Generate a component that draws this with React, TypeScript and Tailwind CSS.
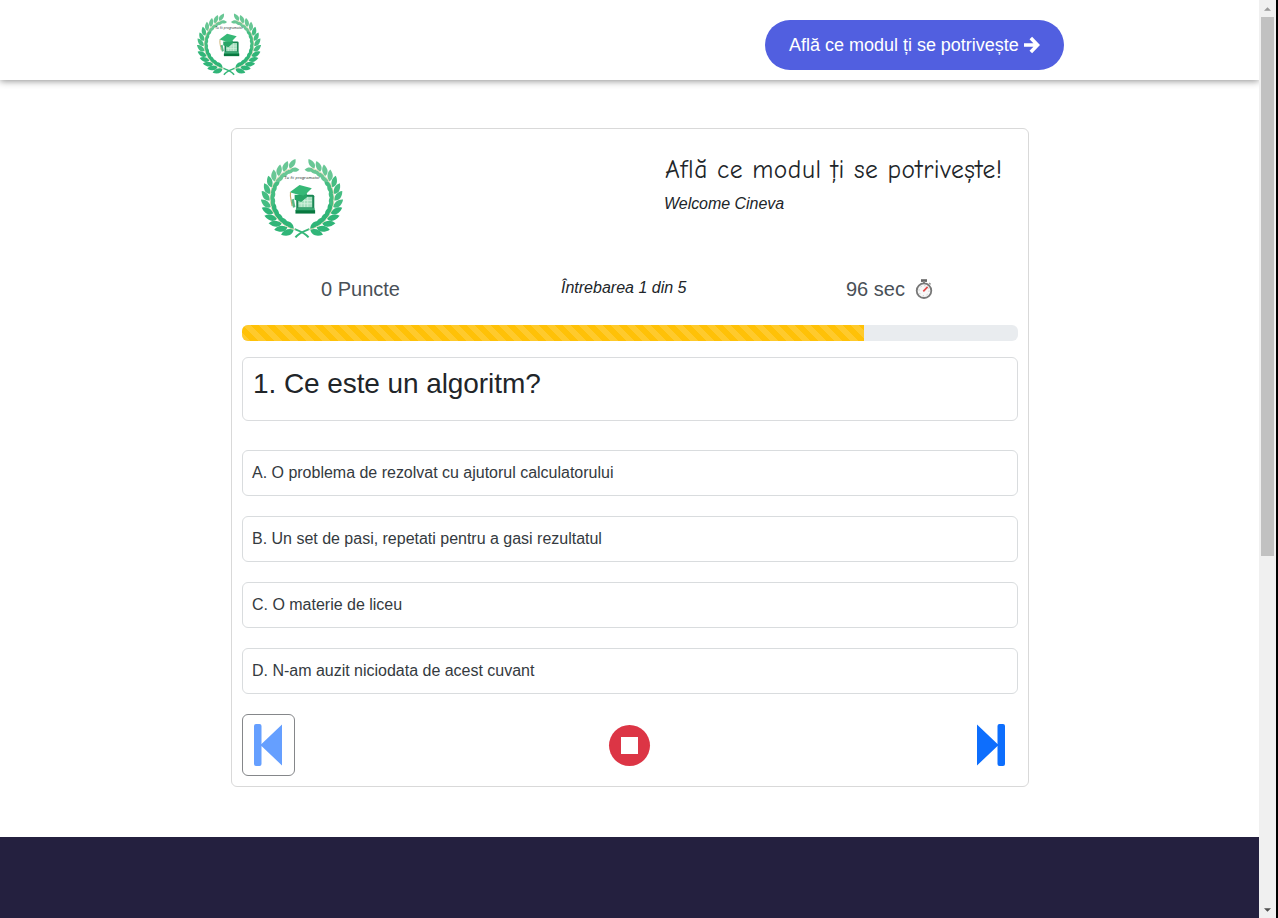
import React from 'react';

const LEAVES = Array.from({ length: 13 }, (_, i) => i);

function Branch() {
  return (
    <g>
      <path d="M58 98C53 92 49 91 41 88" fill="none" stroke="#35b779" strokeWidth="2.4" />
      {LEAVES.map((i) => {
        const deg = 105 + i * 11.9;
        const a = (deg * Math.PI) / 180;
        const r = 39;
        const x = 50 + r * Math.cos(a);
        const y = 50.5 + r * Math.sin(a);
        const size = 1.1 - i * 0.017;
        const fill = i < 5 ? '#30b578' : i < 9 ? '#45bd82' : '#69c795';
        return (
          <g key={i} transform={`translate(${x} ${y}) rotate(${deg + 90}) scale(${size})`} fill={fill}>
            <path d="M0 -0.3C-1 -6 4 -10 12 -9.5C11 -3.5 6 0 0 -0.3Z" />
            <path d="M0 0.5C2 6.5 7 8 11.5 6C9 1 5 -0.5 0 0.5Z" />
          </g>
        );
      })}
      <path d="M42 88.7A39 39 0 0 1 38 13.4" fill="none" stroke="#dccfa3" strokeWidth="0.9" />
    </g>
  );
}

function Logo({ className }: { className: string }) {
  return (
    <svg viewBox="0 0 100 100" className={className} aria-label="Logo">
      <Branch />
      <g transform="translate(100 0) scale(-1 1)">
        <Branch />
      </g>
      <text x="50" y="27" textAnchor="middle" textLength="43" fontSize="5" fontStyle="italic" fontFamily="Liberation Sans, sans-serif" fill="#26332c">
        Tu fii programator
      </text>
      <path d="M45 46h18q2 0 2 2v15H43V48q0-2 2-2Z" fill="#198754" />
      <path d="M45.5 48.5h17v13h-17Z" fill="#a6dfbf" />
      <path d="M49 49v12M53 49v12M57 49v12M46 53h16M46 57h16" stroke="#d5f1df" strokeWidth="1" />
      <path d="M43 62h22l1 4H42Z" fill="#3aa873" />
      <path d="M42 65h24v4H42Z" fill="#08783f" />
      <path d="m35 43 12-9 15 4-10 10Z" fill="#36b876" />
      <path d="M41 46v6l8 3 7-6v-5l-4 3Z" fill="#28a566" />
      <path d="M36 43c-1 6 1 10 2 17" fill="none" stroke="#c7aa68" strokeWidth="1.4" />
      <path d="m37 52 3-1 2 10-3 1Z" fill="#58b886" />
    </svg>
  );
}

function Stopwatch() {
  return (
    <svg viewBox="0 0 18 22" className="h-[22px] w-[18px]">
      <path d="M6 1.2h6v2.7H6Z" fill="#666" />
      <path d="M8 3h2v3H8Z" fill="#888" />
      <path d="m14 5 1.6 1.4" stroke="#999" strokeWidth="1.5" />
      <circle cx="9" cy="12.7" r="7.3" fill="#f7f7f7" stroke="#777" strokeWidth="1.8" />
      <circle cx="9" cy="12.7" r="5" fill="none" stroke="#bbb" strokeWidth="1" strokeDasharray="1 2.9" />
      <path d="m8.3 13.4 4.3-4.5" stroke="#e34848" strokeWidth="1.7" />
    </svg>
  );
}

function SkipIcon({ className }: { className: string }) {
  return (
    <svg viewBox="0 0 28 42" className={className} fill="currentColor">
      <path d="M0 .5 20.5 20V2Q20.5 0 22.5 0H26Q28 0 28 2V40Q28 42 26 42H22.5Q20.5 42 20.5 40V22L0 41.5Z" />
    </svg>
  );
}

const answers = [
  'A. O problema de rezolvat cu ajutorul calculatorului',
  'B. Un set de pasi, repetati pentru a gasi rezultatul',
  'C. O materie de liceu',
  'D. N-am auzit niciodata de acest cuvant',
];

export default function App() {
  return (
    <div className="flex h-[918px] w-[1278px] overflow-hidden bg-white font-['Liberation_Sans',Arial,sans-serif] text-[#212529]">
      <div className="flex w-[1259px] flex-col overflow-hidden">
        <header className="flex h-20 shrink-0 items-start bg-white pr-[195px] pl-[197px] shadow-[0_1px_7px_rgba(0,0,0,0.45)]">
          <Logo className="mt-3 size-16" />
          <button className="mt-5 ml-auto flex h-[50px] w-[299px] items-center rounded-full bg-[#515fe0] pl-6 text-[18px] text-white">
            <span className="tracking-[-0.01px] whitespace-nowrap">Află ce modul ți se potrivește</span>
            <svg viewBox="0 0 16 18" className="ml-[5px] h-[18px] w-4" fill="none" stroke="currentColor" strokeWidth="3.6">
              <path d="M0 9H13M6.8 2 13.6 9 6.8 16" />
            </svg>
          </button>
        </header>

        <main className="flex h-[757px] shrink-0 flex-col pt-12 pl-[231px]">
          <section className="flex h-[659px] w-[798px] flex-col rounded-md border border-[#d9d9d9] px-[10px]">
            <div className="flex h-[140px] shrink-0 pl-[19px]">
              <Logo className="mt-[28px] size-[82px]" />
              <div className="mt-[22px] ml-[321px]">
                <h1 className="h-[38px] pl-px text-[25.5px] leading-[37px] font-medium tracking-[0.55px] whitespace-nowrap font-['Comic_Sans_MS','Comic_Neue','Open_Sans',sans-serif]">
                  Află ce modul ți se potrivește!
                </h1>
                <p className="h-6 text-base leading-[30px] tracking-[-0.04px] italic">Welcome Cineva</p>
              </div>
            </div>

            <div className="flex h-14 shrink-0 pt-[5px] text-xl leading-[30px] text-[#495057]">
              <span className="ml-[79px] w-[240px]">0 Puncte</span>
              <span className="w-[285px] text-base leading-[28px] text-[#212529] italic">Întrebarea 1 din 5</span>
              <span className="flex gap-[10px]">
                96 sec
                <span className="mt-[4px]"><Stopwatch /></span>
              </span>
            </div>

            <div className="h-4 shrink-0 overflow-hidden rounded-md bg-[#e9ecef]">
              <div className="h-full w-[622px] bg-[#ffc107] bg-[linear-gradient(45deg,rgba(255,255,255,.15)_25%,transparent_25%,transparent_50%,rgba(255,255,255,.15)_50%,rgba(255,255,255,.15)_75%,transparent_75%,transparent)] bg-[length:16px_16px]" />
            </div>

            <h2 className="mt-4 h-16 shrink-0 rounded-md border border-[#dadcde] px-[10px] pt-[9px] text-[28px] leading-[34px] tracking-[-0.08px]">1. Ce este un algoritm?</h2>

            <div className="mt-[29px] flex flex-col gap-5">
              {answers.map((answer) => (
                <button key={answer} className="h-[46px] rounded-md border border-[#d9dcde] px-[9px] text-left text-base tracking-[-0.01px] text-[#343a40]">{answer}</button>
              ))}
            </div>

            <div className="mt-5 flex h-[62px] items-center justify-between">
              <button className="flex h-[62px] w-[53px] items-center justify-center rounded-md border border-[#85878a] pr-[2px]">
                <SkipIcon className="h-[42px] w-7 rotate-180 text-[#659fff]" />
              </button>
              <button className="mr-[12px] ml-[-1px] flex size-[41px] items-center justify-center rounded-full bg-[#dc3545]">
                <span className="size-[17px] bg-white" />
              </button>
              <button className="mr-[13px]"><SkipIcon className="h-[42px] w-7 text-[#0d6efd]" /></button>
            </div>
          </section>
        </main>
        <footer className="h-[81px] shrink-0 bg-[#24203f]" />
      </div>

      <aside className="flex w-[17px] shrink-0 flex-col items-center justify-between bg-[#f0f0f0]">
        <div className="flex flex-col items-center">
          <div className="flex h-[17px] items-center">
            <svg viewBox="0 0 8 4" className="h-1 w-[7px] fill-[#999]"><path d="M4 0 8 4H0Z" /></svg>
          </div>
          <div className="h-[539px] w-[13px] bg-[#c1c1c1]" />
        </div>
        <div className="flex h-[17px] items-center">
          <svg viewBox="0 0 8 4" className="h-1 w-[7px] fill-[#505050]"><path d="M0 0H8L4 4Z" /></svg>
        </div>
      </aside>
      <div className="w-[2px] shrink-0 bg-black" />
    </div>
  );
}
